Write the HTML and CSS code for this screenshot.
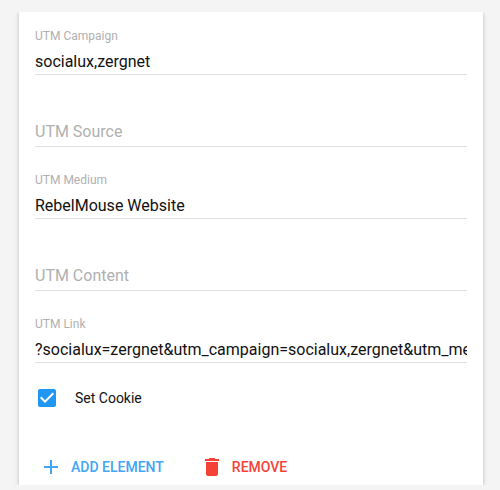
FILE: index.html
```html
<!DOCTYPE html>
<html lang="en">
<head>
    <meta charset="UTF-8">
    <meta name="viewport" content="width=device-width, initial-scale=1.0">
    <title>UTM Settings</title>
    <link rel="stylesheet" href="styles.css">
</head>
<body>

    <div class="panel">
        <form class="card">
            <div class="field">
                <label for="campaign">UTM Campaign</label>
                <input type="text" id="campaign" value="socialux,zergnet">
            </div>
            <div class="field">
                <label for="source"></label>
                <input type="text" id="source" placeholder="UTM Source">
            </div>
            <div class="field">
                <label for="medium">UTM Medium</label>
                <input type="text" id="medium" value="RebelMouse Website">
            </div>
            <div class="field">
                <label for="content"></label>
                <input type="text" id="content" placeholder="UTM Content">
            </div>
            <div class="field">
                <label for="link">UTM Link</label>
                <input type="text" id="link" value="?socialux=zergnet&amp;utm_campaign=socialux,zergnet&amp;utm_medium=RebelMouse">
            </div>

            <div class="checkbox">
                <svg class="icon" viewBox="0 0 24 24">
                    <path d="M19 3H5c-1.11 0-2 .9-2 2v14c0 1.1.89 2 2 2h14c1.11 0 2-.9 2-2V5c0-1.1-.89-2-2-2zm-9 14l-5-5 1.41-1.41L10 14.17l7.59-7.59L19 8l-9 9z"/>
                </svg>
                <span>Set Cookie</span>
            </div>

            <div class="actions">
                <button type="button" class="btn add">
                    <svg class="icon" viewBox="0 0 24 24">
                        <path d="M19 13h-6v6h-2v-6H5v-2h6V5h2v6h6v2z"/>
                    </svg>
                    <span>ADD ELEMENT</span>
                </button>
                <button type="button" class="btn remove">
                    <svg class="icon" viewBox="0 0 24 24">
                        <path d="M6 19c0 1.1.9 2 2 2h8c1.1 0 2-.9 2-2V7H6v12zM19 4h-3.5l-1-1h-5l-1 1H5v2h14V4z"/>
                    </svg>
                    <span>REMOVE</span>
                </button>
            </div>
        </form>
    </div>

</body>
</html>
```

FILE: styles.css
```css
* {
    box-sizing: border-box;
}
body {
    margin: 0;
    padding: 12px 0 5px;
    height: 490px;
    background-color: #f4f4f4;
    font-family: Roboto, sans-serif;
    color: #212121;
}
/* cuts the card shadow at the top and bottom */
.panel {
    height: 473px;
    padding: 0 17px 0 19px;
    overflow: hidden;
}
.card {
    height: 473px;
    padding: 16px 16px 0;
    background: white;
    box-shadow: 0 1px 4px rgba(0, 0, 0, 0.25);
}
.field {
    display: flex;
    flex-direction: column;
    height: 47px;
    margin-bottom: 25px;
    border-bottom: 1px solid #e0e0e0;
}
.field label {
    height: 16px;
    font-size: 12px;
    line-height: 16px;
    color: #b0b0b0;
}
.field input {
    width: 100%;
    height: 30px;
    padding: 4px 0 0;
    border: none;
    outline: none;
    background: none;
    font-family: inherit;
    font-size: 16px;
    color: #111;
}
.field input:placeholder-shown {
    padding-top: 0;
}
.field input::placeholder {
    color: #b0b0b0;
}
.icon {
    width: 24px;
    height: 24px;
    fill: currentColor;
}
.checkbox {
    display: flex;
    align-items: center;
    gap: 16px;
    height: 24px;
    margin-top: -2px;
    font-size: 14px;
    color: #111;
}
.checkbox .icon {
    fill: #2196f3;
}
.actions {
    display: flex;
    gap: 36px;
    margin-top: 45px;
    padding-left: 4px;
}
.btn {
    display: flex;
    align-items: center;
    gap: 8px;
    height: 24px;
    padding: 0;
    border: none;
    background: none;
    font-family: inherit;
    font-size: 14px;
    font-weight: 500;
    cursor: pointer;
}
.add {
    color: #42a5f5;
}
.remove {
    color: #f44336;
}
```
